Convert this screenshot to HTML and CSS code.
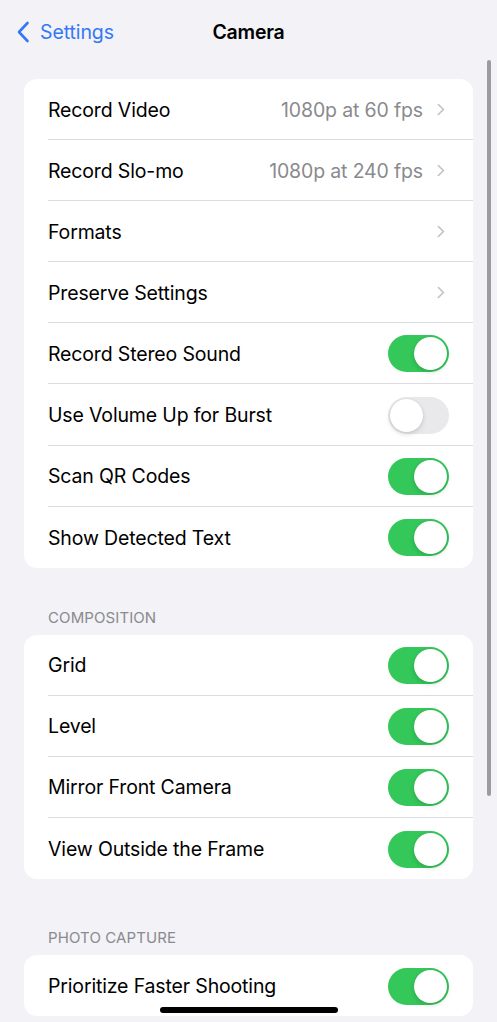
FILE: index.html
```html
<!DOCTYPE html>
<html>
<head>
<meta charset="utf-8">
<link rel="stylesheet" href="styles.css">
</head>
<body>
<div class="screen">
  <header class="nav">
    <div class="back">
      <svg class="back-chev" width="14" height="22" viewBox="0 0 14 22"><path d="M11.5 2 L3 11 L11.5 20" fill="none" stroke="#3478f6" stroke-width="2.6" stroke-linecap="round" stroke-linejoin="round"/></svg>
      <span>Settings</span>
    </div>
    <div class="title">Camera</div>
  </header>

  <section class="card first">
    <div class="row"><div class="inner"><span class="label">Record Video</span><span class="value">1080p at 60 fps</span><span class="chev"></span></div></div>
    <div class="row"><div class="inner"><span class="label">Record Slo-mo</span><span class="value">1080p at 240 fps</span><span class="chev"></span></div></div>
    <div class="row"><div class="inner"><span class="label">Formats</span><span class="chev"></span></div></div>
    <div class="row"><div class="inner"><span class="label">Preserve Settings</span><span class="chev"></span></div></div>
    <div class="row"><div class="inner"><span class="label">Record Stereo Sound</span><span class="toggle on"></span></div></div>
    <div class="row"><div class="inner"><span class="label">Use Volume Up for Burst</span><span class="toggle"></span></div></div>
    <div class="row"><div class="inner"><span class="label">Scan QR Codes</span><span class="toggle on"></span></div></div>
    <div class="row"><div class="inner last"><span class="label">Show Detected Text</span><span class="toggle on"></span></div></div>
  </section>

  <div class="section-title">COMPOSITION</div>
  <section class="card">
    <div class="row"><div class="inner"><span class="label">Grid</span><span class="toggle on"></span></div></div>
    <div class="row"><div class="inner"><span class="label">Level</span><span class="toggle on"></span></div></div>
    <div class="row"><div class="inner"><span class="label">Mirror Front Camera</span><span class="toggle on"></span></div></div>
    <div class="row"><div class="inner last"><span class="label">View Outside the Frame</span><span class="toggle on"></span></div></div>
  </section>

  <div class="section-title photo">PHOTO CAPTURE</div>
  <section class="card">
    <div class="row"><div class="inner last"><span class="label">Prioritize Faster Shooting</span><span class="toggle on"></span></div></div>
  </section>

  <div class="scrollbar"></div>
  <div class="home"></div>
</div>
</body>
</html>
```
FILE: styles.css
```css
* { box-sizing: border-box; }
html, body { margin: 0; padding: 0; }
body {
  background: #f2f2f7;
  font-family: Inter, "Noto Sans", sans-serif;
  color: #000;
  -webkit-font-smoothing: antialiased;
}
.screen {
  position: relative;
  width: 497px;
  height: 1022px;
  overflow: hidden;
  padding: 0 24px;
}
.nav {
  position: relative;
  height: 79px;
  display: flex;
  align-items: flex-start;
  justify-content: center;
  padding-top: 19px;
}
.back {
  position: absolute;
  left: -8px;
  top: 20px;
  display: flex;
  align-items: center;
  gap: 10px;
  color: #3478f6;
  font-size: 19.5px;
  letter-spacing: -0.1px;
}
.back-chev { display: block; }
.title {
  font-size: 19.5px;
  font-weight: 600;
  letter-spacing: -0.2px;
  line-height: 26px;
}
.card {
  background: #fff;
  border-radius: 13px;
  overflow: hidden;
}
.row {
  padding-left: 24px;
}
.inner {
  height: 61.1px;
  display: flex;
  align-items: center;
  border-bottom: 1px solid #dcdce0;
  padding-right: 24px;
  padding-top: 1px;
}
.inner.last { border-bottom: none; }
.label {
  flex: 1;
  font-size: 19.5px;
  letter-spacing: -0.15px;
}
.value {
  font-size: 19.5px;
  color: #8a8a8e;
  letter-spacing: -0.15px;
  margin-right: 11px;
}
.chev {
  width: 9px;
  height: 9px;
  border-top: 2px solid #c4c4c7;
  border-right: 2px solid #c4c4c7;
  transform: rotate(45deg);
  margin-right: 6px;
  border-radius: 1px;
}
.toggle {
  position: relative;
  width: 61px;
  height: 37px;
  border-radius: 19px;
  background: #e9e9eb;
  flex: none;
}
.toggle::after {
  content: "";
  position: absolute;
  top: 2px;
  left: 2px;
  width: 33px;
  height: 33px;
  border-radius: 50%;
  background: #fff;
  box-shadow: 0 2px 5px rgba(0,0,0,0.15), 0 0 1px rgba(0,0,0,0.1);
}
.toggle.on { background: #34c759; }
.toggle.on::after { left: 26px; }
.section-title {
  font-size: 15px;
  color: #8a8a8e;
  padding: 41px 0 8px 24px;
  letter-spacing: 0.1px;
  line-height: 18px;
}
.section-title.photo { padding-top: 50px; }
.scrollbar {
  position: absolute;
  left: 487px;
  top: 60px;
  width: 3.5px;
  height: 736px;
  border-radius: 2px;
  background: #9c9ca0;
}
.home {
  position: absolute;
  left: 160px;
  bottom: 9px;
  width: 178px;
  height: 6px;
  border-radius: 3px;
  background: #000;
}
```
